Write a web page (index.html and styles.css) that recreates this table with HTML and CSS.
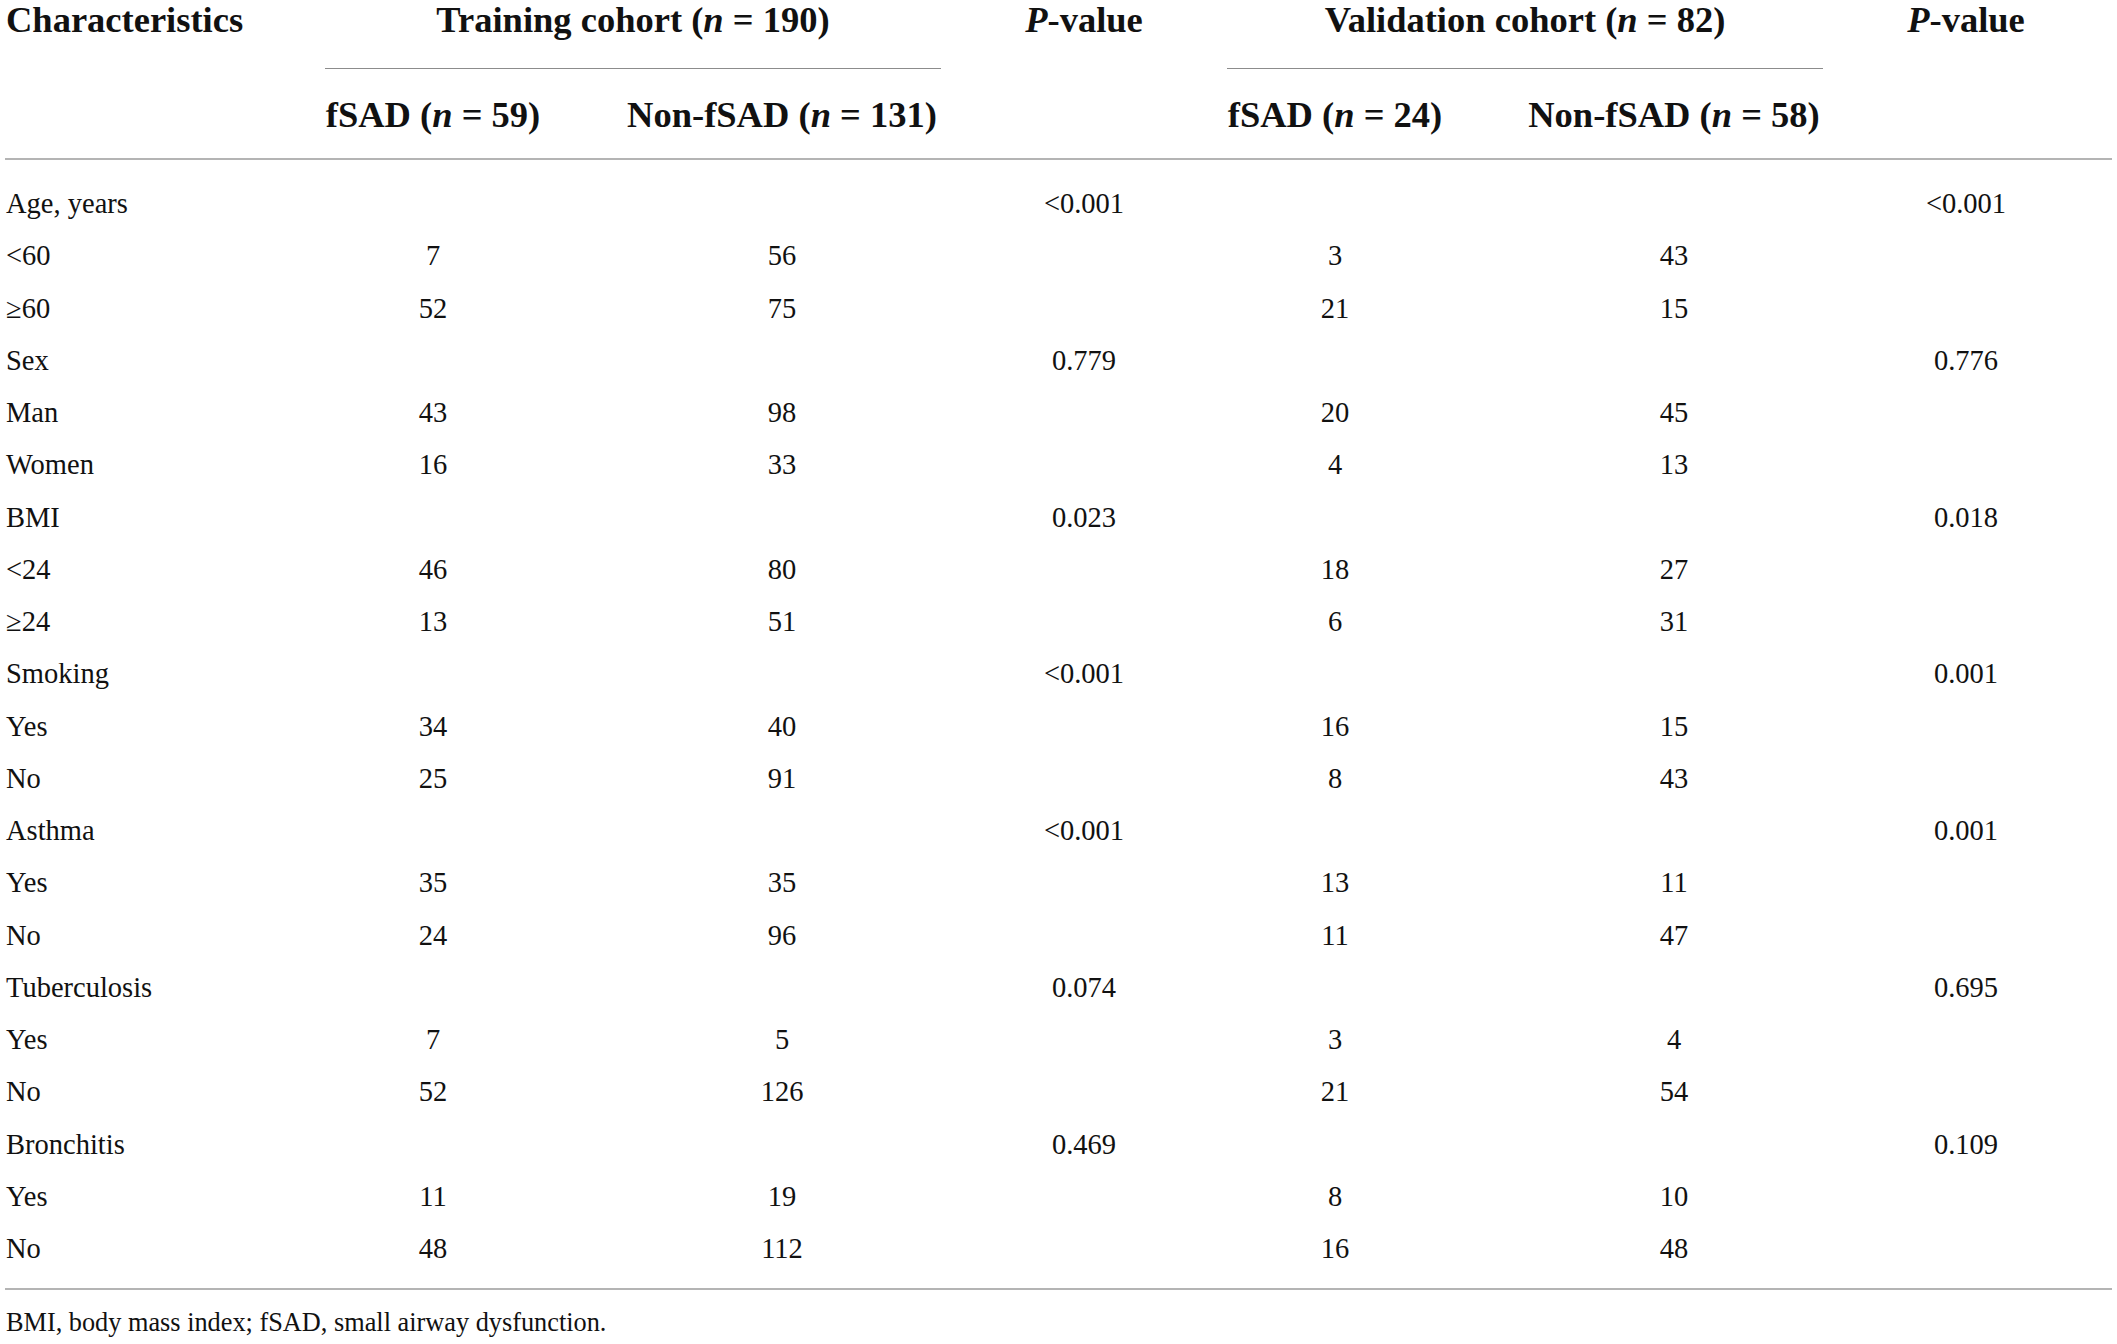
FILE: index.html
```html
<!DOCTYPE html>
<html lang="en">
<head>
<meta charset="UTF-8">
<meta name="viewport" content="width=device-width, initial-scale=1.0">
<title>Characteristics of training and validation cohorts</title>
<link rel="stylesheet" href="styles.css">
</head>
<body>

<div class="table">

  <div class="head cols">
    <div class="th left">Characteristics</div>
    <div class="th group"><span>Training cohort (<i>n</i> = 190)</span></div>
    <div class="th"><span><i>P</i>-value</span></div>
    <div class="th group"><span>Validation cohort (<i>n</i> = 82)</span></div>
    <div class="th"><span><i>P</i>-value</span></div>

    <div class="sub"></div>
    <div class="sub"><span>fSAD (<i>n</i> = 59)</span></div>
    <div class="sub"><span>Non-fSAD (<i>n</i> = 131)</span></div>
    <div class="sub"></div>
    <div class="sub"><span>fSAD (<i>n</i> = 24)</span></div>
    <div class="sub"><span>Non-fSAD (<i>n</i> = 58)</span></div>
    <div class="sub"></div>
  </div>

  <div class="rows cols">
    <div class="left">Age, years</div><div></div><div></div><div>&lt;0.001</div><div></div><div></div><div>&lt;0.001</div>
    <div class="left">&lt;60</div><div>7</div><div>56</div><div></div><div>3</div><div>43</div><div></div>
    <div class="left">&ge;60</div><div>52</div><div>75</div><div></div><div>21</div><div>15</div><div></div>
    <div class="left">Sex</div><div></div><div></div><div>0.779</div><div></div><div></div><div>0.776</div>
    <div class="left">Man</div><div>43</div><div>98</div><div></div><div>20</div><div>45</div><div></div>
    <div class="left">Women</div><div>16</div><div>33</div><div></div><div>4</div><div>13</div><div></div>
    <div class="left">BMI</div><div></div><div></div><div>0.023</div><div></div><div></div><div>0.018</div>
    <div class="left">&lt;24</div><div>46</div><div>80</div><div></div><div>18</div><div>27</div><div></div>
    <div class="left">&ge;24</div><div>13</div><div>51</div><div></div><div>6</div><div>31</div><div></div>
    <div class="left">Smoking</div><div></div><div></div><div>&lt;0.001</div><div></div><div></div><div>0.001</div>
    <div class="left">Yes</div><div>34</div><div>40</div><div></div><div>16</div><div>15</div><div></div>
    <div class="left">No</div><div>25</div><div>91</div><div></div><div>8</div><div>43</div><div></div>
    <div class="left">Asthma</div><div></div><div></div><div>&lt;0.001</div><div></div><div></div><div>0.001</div>
    <div class="left">Yes</div><div>35</div><div>35</div><div></div><div>13</div><div>11</div><div></div>
    <div class="left">No</div><div>24</div><div>96</div><div></div><div>11</div><div>47</div><div></div>
    <div class="left">Tuberculosis</div><div></div><div></div><div>0.074</div><div></div><div></div><div>0.695</div>
    <div class="left">Yes</div><div>7</div><div>5</div><div></div><div>3</div><div>4</div><div></div>
    <div class="left">No</div><div>52</div><div>126</div><div></div><div>21</div><div>54</div><div></div>
    <div class="left">Bronchitis</div><div></div><div></div><div>0.469</div><div></div><div></div><div>0.109</div>
    <div class="left">Yes</div><div>11</div><div>19</div><div></div><div>8</div><div>10</div><div></div>
    <div class="left">No</div><div>48</div><div>112</div><div></div><div>16</div><div>48</div><div></div>
  </div>

  <p class="note">BMI, body mass index; fSAD, small airway dysfunction.</p>

</div>

</body>
</html>
```

FILE: styles.css
```css
body {
  margin: 0;
  background-color: #fff;
  color: #111;
  font-family: "Liberation Serif", "Times New Roman", serif;
}

.table {
  margin-left: 5px;
  width: 2107px;
}

.cols {
  display: grid;
  grid-template-columns: 238px 216px 318px 122px 216px 298px 122px;
  column-gap: 82px;
  text-align: center;
  white-space: nowrap;
}

.left {
  text-align: left;
  padding-left: 1px;
}

/* header */
.head {
  border-bottom: 2px solid #b4b4b4;
  font-size: 36.5px;
  font-weight: bold;
}

.th,
.sub {
  display: flex;
  justify-content: center;
  line-height: 40px;
}

.th {
  align-self: start;
}

.th.left {
  justify-content: flex-start;
}

.th.group {
  grid-column: span 2;
  padding-bottom: 28px;
  border-bottom: 1px solid #8c8c8c;
}

.sub {
  margin-top: 26px;
  padding-bottom: 23px;
}

/* body rows */
.rows {
  grid-auto-rows: 52.25px;
  align-items: center;
  padding: 18px 0 13px;
  border-bottom: 2px solid #b4b4b4;
  font-size: 28.5px;
  line-height: 52.25px;
}

.note {
  margin: 14px 0 0;
  padding-left: 1px;
  font-size: 26.3px;
  line-height: 38px;
}
```
